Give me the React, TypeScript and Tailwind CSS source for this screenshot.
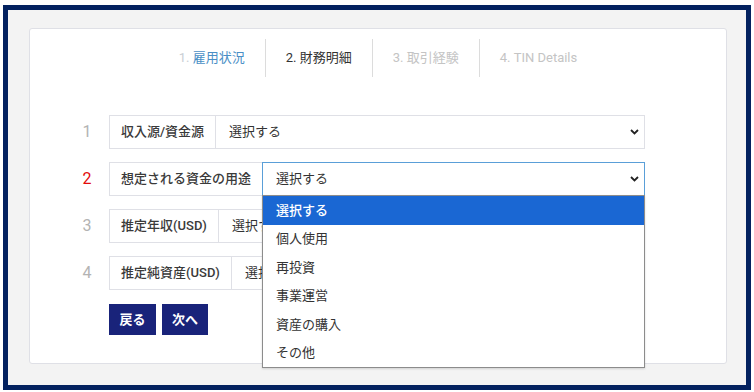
const font = "font-['Roboto','Noto_Sans_CJK_JP',sans-serif]";

const steps = [
  { no: '1.', label: '雇用状況', state: 'done' },
  { no: '2.', label: '財務明細', state: 'active' },
  { no: '3.', label: '取引経験', state: 'todo' },
  { no: '4.', label: 'TIN Details', state: 'todo' },
];

const rows = [
  { no: '1', label: '収入源/資金源' },
  { no: '2', label: '想定される資金の用途', open: true },
  { no: '3', label: '推定年収(USD)' },
  { no: '4', label: '推定純資産(USD)' },
];

const options = ['選択する', '個人使用', '再投資', '事業運営', '資産の購入', 'その他'];

function Chevron() {
  return (
    <svg width="9" height="6" viewBox="0 0 9 6" className="shrink-0">
      <path d="M1 1l3.5 3.5L8 1" fill="none" stroke="#222" strokeWidth="1.8" />
    </svg>
  );
}

export default function App() {
  return (
    <div className={`w-[754px] h-[392px] bg-white pt-[5px] pl-[3px] pr-[3px] pb-[2px] ${font}`}>
      <div className="h-full border-[5px] border-[#03215f] bg-[#f3f3f3] pt-[18px] pl-[21px] pr-[19px]">
        <div className="h-[336px] bg-white border border-[#dfe0e6] rounded-[3px] pt-[10px]">
          {/* steps */}
          <div className="flex justify-center">
            {steps.map((s, i) => (
              <div
                key={s.no}
                className={`h-[38px] px-[20px] flex items-center text-[13px] ${i > 0 ? 'border-l border-[#dcdcdc]' : ''}`}
              >
                {s.state === 'done' && (
                  <>
                    <span className="text-[#c9ced4]">{s.no}&nbsp;</span>
                    <span className="text-[#4a8fc6]">{s.label}</span>
                  </>
                )}
                {s.state === 'active' && (
                  <span className="text-[#333]">
                    {s.no}&nbsp;{s.label}
                  </span>
                )}
                {s.state === 'todo' && (
                  <span className="text-[#c4c4c4]">
                    {s.no}&nbsp;{s.label}
                  </span>
                )}
              </div>
            ))}
          </div>

          {/* form */}
          <div className="mt-[38px] pl-[44px] pr-[81px] flex flex-col gap-[13px]">
            {rows.map((r) => (
              <div key={r.no} className="flex items-center h-[34px]">
                <div
                  className={`w-[26px] mr-[9px] text-center text-[16px] ${r.open ? 'text-[#e30b0b]' : 'text-[#b3b3b3]'}`}
                >
                  {r.no}
                </div>
                <div className="h-full flex items-center px-[11px] border border-[#dfe0e6] text-[13px] font-medium text-[#3a3a3a] whitespace-nowrap">
                  {r.label}
                </div>
                <div
                  className={`relative flex-1 h-full -ml-px flex items-center justify-between pl-[13px] pr-[5px] border text-[13px] text-[#333] ${r.open ? 'border-[#5a9fd8]' : 'border-[#dfe0e6]'}`}
                >
                  <span>選択する</span>
                  <Chevron />
                  {r.open && (
                    <div className="absolute z-10 left-[-1px] right-[-1px] top-full border border-[#8c8c8c] bg-white shadow-[0_1px_2px_rgba(0,0,0,0.15)]">
                      {options.map((o, i) => (
                        <div
                          key={o}
                          className={`h-[28.5px] flex items-center pl-[13px] text-[13px] ${i === 0 ? 'bg-[#1a67d3] text-white font-medium' : 'text-[#333]'}`}
                        >
                          {o}
                        </div>
                      ))}
                    </div>
                  )}
                </div>
              </div>
            ))}

            <div className="flex gap-[6px] ml-[35px] mt-px">
              <button className="h-[31px] w-[47px] bg-[#19237a] text-white text-[13px] font-bold">戻る</button>
              <button className="h-[31px] w-[46px] bg-[#19237a] text-white text-[13px] font-bold">次へ</button>
            </div>
          </div>
        </div>
      </div>
    </div>
  );
}
